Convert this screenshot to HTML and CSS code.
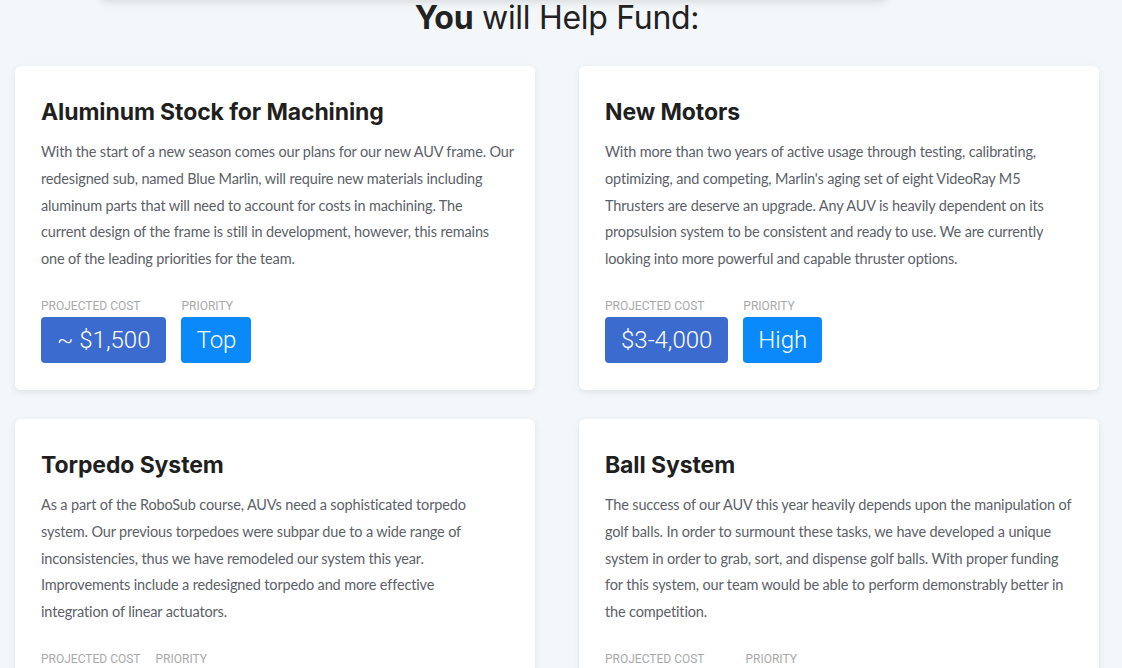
FILE: index.html
```html
<!DOCTYPE html>
<html>
<head>
<meta charset="utf-8">
<link rel="stylesheet" href="styles.css">
</head>
<body>
<div class="top-panel"></div>
<div class="container">
  <h2 class="section-title"><b>You</b> will Help Fund:</h2>
  <div class="grid">
    <div class="card">
      <h3 class="card-title">Aluminum Stock for Machining</h3>
      <p class="card-text">With the start of a new season comes our plans for our new AUV frame. Our<br>redesigned sub, named Blue Marlin, will require new materials including<br>aluminum parts that will need to account for costs in machining. The<br>current design of the frame is still in development, however, this remains<br>one of the leading priorities for the team.</p>
      <div class="meta">
        <div class="meta-item"><span class="label">Projected Cost</span><span class="badge cost">~ $1,500</span></div>
        <div class="meta-item"><span class="label">Priority</span><span class="badge prio">Top</span></div>
      </div>
    </div>
    <div class="card">
      <h3 class="card-title">New Motors</h3>
      <p class="card-text">With more than two years of active usage through testing, calibrating,<br>optimizing, and competing, Marlin's aging set of eight VideoRay M5<br>Thrusters are deserve an upgrade. Any AUV is heavily dependent on its<br>propsulsion system to be consistent and ready to use. We are currently<br>looking into more powerful and capable thruster options.</p>
      <div class="meta">
        <div class="meta-item"><span class="label">Projected Cost</span><span class="badge cost">$3-4,000</span></div>
        <div class="meta-item"><span class="label">Priority</span><span class="badge prio">High</span></div>
      </div>
    </div>
    <div class="card">
      <h3 class="card-title">Torpedo System</h3>
      <p class="card-text">As a part of the RoboSub course, AUVs need a sophisticated torpedo<br>system. Our previous torpedoes were subpar due to a wide range of<br>inconsistencies, thus we have remodeled our system this year.<br>Improvements include a redesigned torpedo and more effective<br>integration of linear actuators.</p>
      <div class="meta">
        <div class="meta-item"><span class="label">Projected Cost</span><span class="badge cost">$500</span></div>
        <div class="meta-item"><span class="label">Priority</span><span class="badge prio">High</span></div>
      </div>
    </div>
    <div class="card">
      <h3 class="card-title">Ball System</h3>
      <p class="card-text">The success of our AUV this year heavily depends upon the manipulation of<br>golf balls. In order to surmount these tasks, we have developed a unique<br>system in order to grab, sort, and dispense golf balls. With proper funding<br>for this system, our team would be able to perform demonstrably better in<br>the competition.</p>
      <div class="meta">
        <div class="meta-item"><span class="label">Projected Cost</span><span class="badge cost">~ $2,500</span></div>
        <div class="meta-item"><span class="label">Priority</span><span class="badge prio">High</span></div>
      </div>
    </div>
  </div>
</div>
</body>
</html>
```

FILE: styles.css
```css
* { box-sizing: border-box; }
html, body { margin: 0; padding: 0; }
body {
  background: #f4f7fa;
  font-family: "Lato", "Liberation Sans", sans-serif;
  overflow: hidden;
}
.top-panel {
  width: 787px;
  height: 40px;
  margin: -40px 0 0 100px;
  background: #fff;
  box-shadow: 0 2px 8px rgba(0,0,0,0.12);
  border-radius: 6px;
}
.container {
  padding: 0 23px 0 15px;
}
.section-title {
  margin: -3px 0 0;
  text-align: center;
  font-family: "Inter", "Liberation Sans", sans-serif;
  font-weight: 400;
  font-size: 32px;
  line-height: 42px;
  color: #222;
  letter-spacing: -0.3px;
}
.section-title b { font-weight: 700; }
.grid {
  margin-top: 27px;
  display: grid;
  grid-template-columns: 520px 520px;
  column-gap: 44px;
  row-gap: 29px;
}
.card {
  background: #fff;
  border-radius: 6px;
  box-shadow: 0 2px 6px rgba(30,40,60,0.10);
  padding: 31px 26px 27px;
  height: 324px;
}
.card-title {
  margin: 0;
  font-family: "Inter", "Liberation Sans", sans-serif;
  font-weight: 700;
  font-size: 23px;
  line-height: 30px;
  color: #1f1f1f;
  letter-spacing: -0.1px;
}
.card-text {
  margin: 12px 0 0;
  font-size: 14.5px;
  letter-spacing: -0.15px;
  line-height: 26.8px;
  color: #5b5f69;
  height: 134px;
  white-space: nowrap;
}
.meta {
  margin-top: 26px;
  display: flex;
  gap: 15px;
}
.meta-item {
  display: flex;
  flex-direction: column;
}
.label {
  font-family: "Roboto", sans-serif;
  font-size: 12px;
  line-height: 14px;
  text-transform: uppercase;
  color: #a9a9a9;
  margin-bottom: 4px;
}
.badge {
  display: inline-block;
  height: 46px;
  line-height: 46px;
  padding: 0 16px;
  border-radius: 4px;
  color: #fff;
  font-family: "Roboto", sans-serif;
  font-weight: 300;
  font-size: 24px;
  align-self: flex-start;
}
.badge.cost { background: #3c6bcf; }
.badge.prio { background: #0a8afa; padding: 0 15px; }
```
